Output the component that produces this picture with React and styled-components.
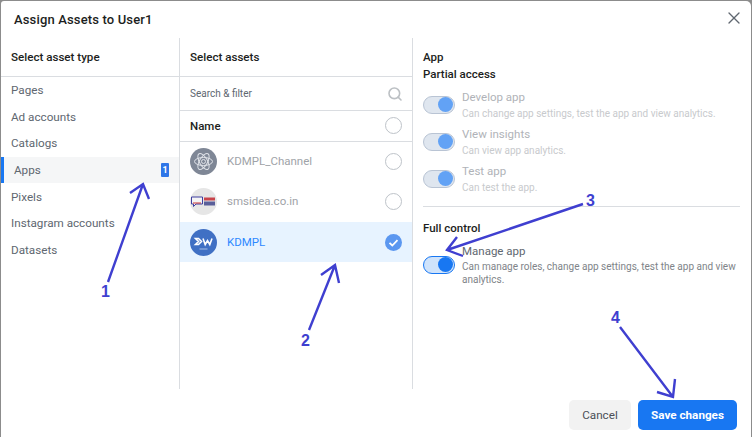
import React from 'react'
import styled, { createGlobalStyle } from 'styled-components'
import { Search, X } from 'lucide-react'

const GlobalStyle = createGlobalStyle`
  html, body {
    margin: 0;
    padding: 0;
    background: #8c8c8c;
  }
  body {
    font-family: Roboto, "Liberation Sans", sans-serif;
    -webkit-font-smoothing: antialiased;
  }
`

const Page = styled.div`
  position: relative;
  width: 752px;
  height: 437px;
  padding: 1px 1px 0 1px;
  box-sizing: border-box;
  overflow: hidden;
`

const Dialog = styled.div`
  width: 750px;
  height: 436px;
  background: #fff;
  border-radius: 3px 5px 0 0;
  display: flex;
  flex-direction: column;
`

const Header = styled.div`
  height: 37px;
  flex: none;
  display: flex;
  align-items: center;
  justify-content: space-between;
  padding: 0 7px 0 13px;
  box-sizing: border-box;
`

const Title = styled.div`
  font-size: 13px;
  font-weight: 500;
  color: #1c1e21;
  letter-spacing: 0.15px;
`

const CloseIcon = styled(X)`
  color: #606770;
  margin-bottom: 3px;
`

const Body = styled.div`
  height: 351px;
  flex: none;
  display: flex;
`

const TypeColumn = styled.div`
  width: 178px;
  flex: none;
  border-right: 1px solid #dadde1;
`

const AssetColumn = styled.div`
  width: 232px;
  flex: none;
  border-right: 1px solid #dadde1;
`

const DetailColumn = styled.div`
  flex: 1;
  padding: 11px 11px 0 10px;
`

const ColumnHeading = styled.div`
  height: 37px;
  border-bottom: 1px solid #dadde1;
  display: flex;
  align-items: center;
  padding-left: ${p => p.$inset}px;
  padding-bottom: 1px;
  font-size: 11.6px;
  font-weight: 500;
  color: #1c1e21;
`

const TypeRow = styled.div`
  height: 26.6px;
  display: flex;
  align-items: center;
  justify-content: space-between;
  box-sizing: border-box;
  padding: 0 10px 0 ${p => (p.$active ? 13 : 10)}px;
  font-size: 11.7px;
  color: #606770;
  background: ${p => (p.$active ? '#f5f6f7' : 'transparent')};
  box-shadow: ${p => (p.$active ? 'inset 3px 0 0 #1877f2' : 'none')};
`

const Badge = styled.span`
  width: 8px;
  height: 14px;
  border-radius: 1px;
  background: #2f76e8;
  color: #fff;
  font-size: 9px;
  font-weight: 700;
  display: flex;
  align-items: center;
  justify-content: center;
`

const SearchRow = styled.div`
  height: 33px;
  border-bottom: 1px solid #dadde1;
  display: flex;
  align-items: center;
  justify-content: space-between;
  padding: 0 9px 0 10px;
  font-size: 10px;
  color: #606770;
`

const SearchIcon = styled(Search)`
  color: #bcc0c4;
`

const NameRow = styled.div`
  height: 29px;
  padding: 0 10px 1px;
  border-bottom: 1px solid #dadde1;
  display: flex;
  align-items: center;
  justify-content: space-between;
  font-size: 11.5px;
  font-weight: 500;
  color: #1c1e21;
`

const AssetRow = styled.div`
  height: ${p => (p.$selected ? 40 : 39.5)}px;
  display: flex;
  align-items: center;
  gap: 10px;
  padding: 0 10px;
  margin-top: ${p => (p.$selected ? 1 : 0)}px;
  font-size: 11.5px;
  color: ${p => (p.$selected ? '#2d88ff' : '#a0a3a8')};
  background: ${p => (p.$selected ? '#e7f3ff' : 'transparent')};
`

const AssetName = styled.span`
  flex: 1;
  padding-bottom: 1px;
`

const Radio = styled.span`
  width: 17px;
  height: 17px;
  flex: none;
  box-sizing: border-box;
  border-radius: 50%;
  border: 1px solid #bec3c9;
  background: #fff;
`

const CheckRadio = styled.svg`
  width: 17px;
  height: 17px;
  flex: none;
`

const DetailTitle = styled.div`
  font-size: 11.5px;
  font-weight: 500;
  color: #1c1e21;
  line-height: 17px;
`

const Permission = styled.div`
  display: flex;
  gap: 7px;
  margin-top: ${p => p.$gap}px;
`

const Toggle = styled.span`
  width: 32px;
  height: 18px;
  flex: none;
  margin-top: ${p => p.$offset}px;
  box-sizing: border-box;
  border-radius: 9px;
  border: 1px solid #1877f2;
  background: #cfe3fb;
  display: flex;
  align-items: center;
  justify-content: flex-end;
  padding-right: 1px;
`

const Knob = styled.span`
  width: 15px;
  height: 15px;
  border-radius: 50%;
  background: #1877f2;
`

const DimToggle = styled(Toggle)`
  border-color: #b9c4d4;
  background: #dfe6ef;
`

const DimKnob = styled(Knob)`
  background: #62a2f5;
`

const PermissionName = styled.div`
  font-size: 11.5px;
  line-height: 15px;
  margin-bottom: ${p => (p.$dim ? 2 : 1)}px;
  color: ${p => (p.$dim ? '#b0b3b8' : '#606770')};
`

const PermissionText = styled.div`
  font-size: 10px;
  line-height: 13.5px;
  color: ${p => (p.$dim ? '#c8cacd' : '#808489')};
`

const Divider = styled.div`
  height: 1px;
  background: #dadde1;
  margin: 11px 0 13px;
`

const Footer = styled.div`
  flex: 1;
  display: flex;
  justify-content: flex-end;
  gap: 7px;
  padding: 11px 14px 0 0;
`

const Button = styled.button`
  height: 30px;
  width: ${p => (p.$primary ? 99 : 62)}px;
  border: none;
  border-radius: 5px;
  padding: 0;
  font-family: inherit;
  font-size: 11.7px;
  font-weight: ${p => (p.$primary ? 700 : 400)};
  color: ${p => (p.$primary ? '#fff' : '#4b4f56')};
  background: ${p => (p.$primary ? '#1877f2' : '#f2f2f2')};
`

const Annotations = styled.svg`
  position: absolute;
  left: 0;
  top: 0;
  width: 752px;
  height: 437px;
  pointer-events: none;
`

const Number = styled.text`
  font-family: "Liberation Sans", sans-serif;
  font-size: 16px;
  font-weight: 700;
  fill: #3f3fd0;
`

const Avatar = styled.svg`
  width: 27px;
  height: 27px;
  flex: none;
`

const AtomAvatar = () => (
  <Avatar viewBox="0 0 27 27">
    <circle cx="13.5" cy="13.5" r="13.5" fill="#7f8796" />
    <g fill="none" stroke="#dfe2e8" strokeWidth="1">
      <ellipse cx="13.5" cy="13.5" rx="9" ry="4" />
      <ellipse cx="13.5" cy="13.5" rx="9" ry="4" transform="rotate(60 13.5 13.5)" />
      <ellipse cx="13.5" cy="13.5" rx="9" ry="4" transform="rotate(120 13.5 13.5)" />
      <circle cx="13.5" cy="13.5" r="2" />
    </g>
  </Avatar>
)

const SmsAvatar = () => (
  <Avatar viewBox="0 0 27 27">
    <circle cx="13.5" cy="13.5" r="13.5" fill="#e6e6e6" />
    <path d="M1.5 9h11v7H6l-2.5 2.5V16h-2z" fill="#f4f4f4" stroke="#3f3f9f" strokeWidth="1" />
    <path d="M3 15h8" stroke="#c33" strokeWidth="1" />
    <rect x="14" y="9.5" width="11" height="3" fill="#c8434a" />
    <rect x="14" y="13.5" width="11" height="4" fill="#5a5f9a" />
  </Avatar>
)

const KdmplAvatar = () => (
  <Avatar viewBox="0 0 27 27">
    <circle cx="13.5" cy="13.5" r="13.5" fill="#4070c4" />
    <path d="M5.5 9.5h3l3 3-3 3h-3l3-3zM13 9.5l2.2 6 2.3-4 2.3 4 2.2-6" fill="none" stroke="#fff" strokeWidth="1.6" />
    <path d="M9.5 20h8" stroke="#c4d4f0" strokeWidth="0.8" />
  </Avatar>
)

const types = ['Pages', 'Ad accounts', 'Catalogs', 'Apps', 'Pixels', 'Instagram accounts', 'Datasets']

const partial = [
  { name: 'Develop app', text: 'Can change app settings, test the app and view analytics.', gap: 7 },
  { name: 'View insights', text: 'Can view app analytics.', gap: 6.5 },
  { name: 'Test app', text: 'Can test the app.', gap: 6.5 },
]

export default function App() {
  return (
    <Page>
      <GlobalStyle />
      <Dialog>
        <Header>
          <Title>Assign Assets to User1</Title>
          <CloseIcon size={20} strokeWidth={1.6} />
        </Header>
        <Body>
          <TypeColumn>
            <ColumnHeading $inset={10}>Select asset type</ColumnHeading>
            {types.map(t => (
              <TypeRow key={t} $active={t === 'Apps'}>
                {t}
                {t === 'Apps' && <Badge>1</Badge>}
              </TypeRow>
            ))}
          </TypeColumn>
          <AssetColumn>
            <ColumnHeading $inset={10}>Select assets</ColumnHeading>
            <SearchRow>
              Search &amp; filter
              <SearchIcon size={16} strokeWidth={2.4} />
            </SearchRow>
            <NameRow>
              Name
              <Radio />
            </NameRow>
            <AssetRow>
              <AtomAvatar />
              <AssetName>KDMPL_Channel</AssetName>
              <Radio />
            </AssetRow>
            <AssetRow>
              <SmsAvatar />
              <AssetName>smsidea.co.in</AssetName>
              <Radio />
            </AssetRow>
            <AssetRow $selected>
              <KdmplAvatar />
              <AssetName>KDMPL</AssetName>
              <CheckRadio viewBox="0 0 17 17">
                <circle cx="8.5" cy="8.5" r="8.5" fill="#5b97f0" />
                <path d="M4.5 8.8l2.8 2.7 5.2-5.4" fill="none" stroke="#fff" strokeWidth="1.8" />
              </CheckRadio>
            </AssetRow>
          </AssetColumn>
          <DetailColumn>
            <DetailTitle>App</DetailTitle>
            <DetailTitle>Partial access</DetailTitle>
            {partial.map(p => (
              <Permission key={p.name} $gap={p.gap}>
                <DimToggle $offset={5.5}>
                  <DimKnob />
                </DimToggle>
                <div>
                  <PermissionName $dim>{p.name}</PermissionName>
                  <PermissionText $dim>{p.text}</PermissionText>
                </div>
              </Permission>
            ))}
            <Divider />
            <DetailTitle>Full control</DetailTitle>
            <Permission $gap={7}>
              <Toggle $offset={12}>
                <Knob />
              </Toggle>
              <div>
                <PermissionName>Manage app</PermissionName>
                <PermissionText>Can manage roles, change app settings, test the app and view analytics.</PermissionText>
              </div>
            </Permission>
          </DetailColumn>
        </Body>
        <Footer>
          <Button>Cancel</Button>
          <Button $primary>Save changes</Button>
        </Footer>
      </Dialog>
      <Annotations viewBox="0 0 752 437">
        <g fill="none" stroke="#3f3fd0" strokeWidth="2.4">
          <path d="M108 282L143 184M130 193L143 184L149 199" />
          <path d="M309 330L335 265M321 275L335 265L339 283" />
          <path d="M583 204L447 250M457 237L447 250L463 256" />
          <path d="M620 327L673 397M675 379L673 397L657 392" />
        </g>
        <Number x="101" y="297">1</Number>
        <Number x="301" y="346">2</Number>
        <Number x="586" y="206">3</Number>
        <Number x="611" y="323">4</Number>
      </Annotations>
    </Page>
  )
}
